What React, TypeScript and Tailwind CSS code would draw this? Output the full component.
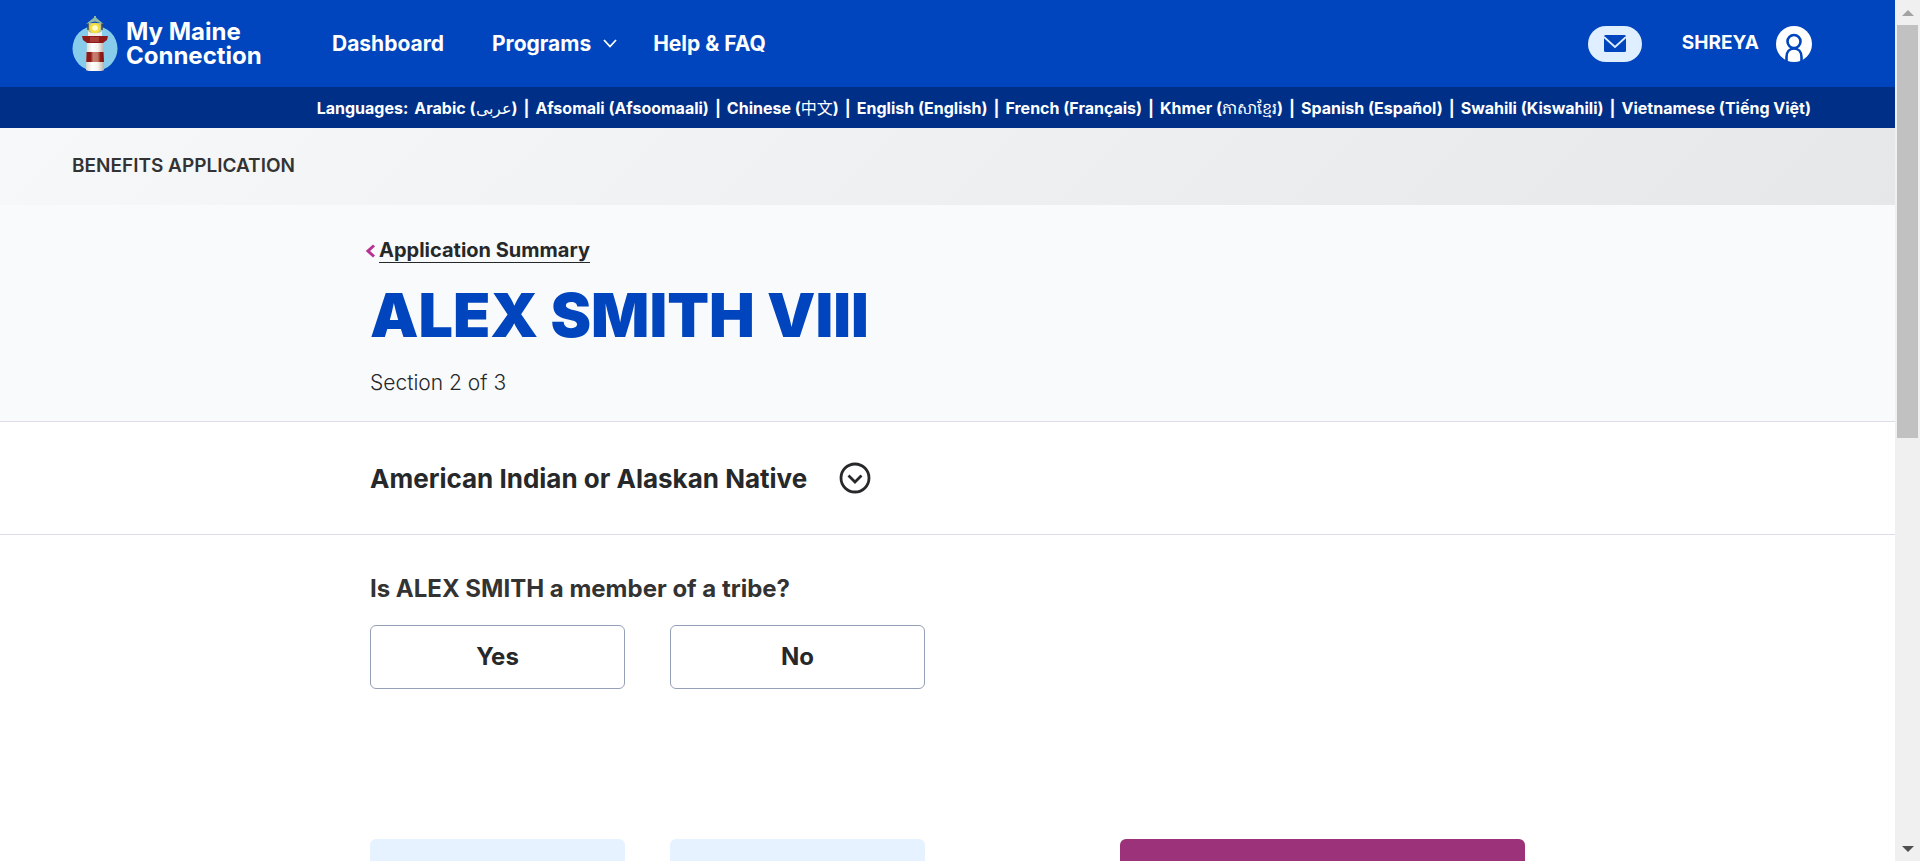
import { Fragment } from "react";

const languages = [
  { name: "Arabic", native: "عربى", light: true },
  { name: "Afsomali", native: "Afsoomaali" },
  { name: "Chinese", native: "中文", light: true },
  { name: "English", native: "English" },
  { name: "French", native: "Français" },
  { name: "Khmer", native: "ភាសាខ្មែរ", light: true },
  { name: "Spanish", native: "Español" },
  { name: "Swahili", native: "Kiswahili" },
  { name: "Vietnamese", native: "Tiếng Việt" },
];

function Lighthouse() {
  return (
    <svg width="46" height="56" viewBox="0 0 46 56" aria-hidden="true">
      <defs>
        <clipPath id="disc">
          <path d="M0 0H46V33A23 23 0 0 1 0 33Z" />
        </clipPath>
        <linearGradient id="tower" x1="0" x2="1" y1="0" y2="0">
          <stop offset="0" stopColor="#d9d5cf" />
          <stop offset="0.35" stopColor="#ffffff" />
          <stop offset="0.65" stopColor="#f7f4ef" />
          <stop offset="1" stopColor="#b9b2aa" />
        </linearGradient>
        <linearGradient id="band" x1="0" x2="1" y1="0" y2="0">
          <stop offset="0" stopColor="#8e1b17" />
          <stop offset="0.25" stopColor="#8e1b17" />
          <stop offset="0.4" stopColor="#c98070" />
          <stop offset="0.65" stopColor="#c07565" />
          <stop offset="0.8" stopColor="#941f1a" />
          <stop offset="1" stopColor="#7a1512" />
        </linearGradient>
      </defs>
      <circle cx="23" cy="32.500" r="22.500" fill="#87cdeb" />
      <g clipPath="url(#disc)">
        <path d="M15 22H31L32 55H14Z" fill="url(#tower)" />
        <path d="M14.500 36H31.500L32 46H14.200Z" fill="url(#band)" />
      </g>
      <rect x="16" y="7" width="14" height="12" fill="#b9c39a" />
      <path d="M16 7V14M30 7V14" stroke="#3f4a44" strokeWidth="1.500" />
      <circle cx="23" cy="12" r="5.300" fill="#f5df3a" />
      <circle cx="23" cy="12" r="2.800" fill="#fffbd0" />
      <path d="M14 8L22 1.500V0H24V1.500L31.500 8L23 5.500Z" fill="#8fb7a5" />
      <path d="M16 15C18 18 28 18 30 15V21H16Z" fill="#f3efe8" />
      <path d="M10 20H36L35 24L31 27H15L11 24Z" fill="#8f1a1a" />
      <path d="M18 21H27V26H18Z" fill="#a83b35" />
    </svg>
  );
}

function ScrollBar() {
  return (
    <div aria-hidden="true" className="flex w-[25px] shrink-0 flex-col items-center bg-[#f0f0f0]">
      <div className="flex h-[25px] shrink-0 items-center">
        <svg width="12" height="6" viewBox="0 0 12 6"><path d="M6 0L12 6H0Z" fill="#a3a3a3" /></svg>
      </div>
      <div className="h-[48%] w-[21px] bg-[#c1c1c1]" />
      <div className="mt-auto flex h-[25px] items-center">
        <svg width="12" height="6" viewBox="0 0 12 6"><path d="M0 0H12L6 6Z" fill="#505050" /></svg>
      </div>
    </div>
  );
}

export default function App() {
  return (
    <div className="flex h-screen overflow-hidden bg-white font-['Inter','Noto_Sans_CJK_SC',sans-serif] text-[#26282a]">
      <div className="min-w-0 flex-1 overflow-hidden">
        <header>
          <div className="flex h-[87px] items-center bg-[#0045bd] pr-[83px] pl-[72px] text-[21px] font-bold text-white">
            <a href="#home" className="flex items-center gap-2">
              <Lighthouse />
              <span className="flex w-[140px] flex-col text-2xl leading-6 whitespace-nowrap">
                <span>My Maine</span>
                <span>Connection</span>
              </span>
            </a>
            <nav className="ml-[66px] flex items-center gap-[48px]">
              <a href="#dashboard">Dashboard</a>
              <button type="button" className="-mr-3 flex items-center gap-3">
                Programs
                <svg width="14" height="9" viewBox="0 0 14 9" fill="none" stroke="currentColor" strokeWidth="1.800"><path d="M1 1L7 7.500L13 1" /></svg>
              </button>
              <a href="#help">Help &amp; FAQ</a>
            </nav>
            <div className="ml-auto flex items-center">
              <button type="button" aria-label="Messages" className="flex h-9 w-[54px] items-center justify-center rounded-full bg-[#e0efff]">
                <svg width="22" height="17" viewBox="0 0 22 17"><rect width="22" height="17" rx="1.500" fill="#0045bd" /><path d="M0 2L11 12L22 2" fill="none" stroke="#e0efff" strokeWidth="1.800" /></svg>
              </button>
              <button type="button" className="ml-10 flex items-center gap-[17px] text-[19px]">
                SHREYA
                <svg width="36" height="36" viewBox="0 0 36 36" aria-hidden="true">
                  <circle cx="18" cy="18" r="18" fill="#fff" />
                  <g fill="none" stroke="#0045bd" strokeWidth="2.600">
                    <circle cx="18" cy="15.500" r="6.500" />
                    <path d="M10.500 36V31C10.500 26 13.500 22.500 18 22.500S25.500 26 25.500 31V36" />
                  </g>
                </svg>
              </button>
            </div>
          </div>
          <div className="flex h-[41px] items-center justify-end gap-[6px] bg-[#002f87] pr-[84px] text-base font-bold whitespace-nowrap text-white">
            <span>Languages:</span>
            {languages.map(({ name, native, light }, i) => (
              <Fragment key={name}>
                {i > 0 && <span>|</span>}
                <a href="#language">
                  {name} (<span className={light ? "font-normal" : ""}>{native}</span>)
                </a>
              </Fragment>
            ))}
          </div>
        </header>

        <div className="flex h-[77px] items-center bg-linear-[135deg] from-[#f6f8fa] to-[#e6e7e9] pl-[72px]">
          <p className="text-[19px] font-semibold text-[#333]">BENEFITS APPLICATION</p>
        </div>

        <main>
          <section className="border-b border-[#dcdde8] bg-[#f8fafc]">
            <div className="mx-auto h-[216px] max-w-[1155px] pt-[33px]">
              <a href="#summary" className="flex items-center text-xl leading-7 font-bold">
                <svg width="9" height="14" viewBox="0 0 9 14" fill="none" stroke="#b83292" strokeWidth="3" className="-ml-1 shrink-0"><path d="M8 1.500L2 7L8 12.500" /></svg>
                <span className="ml-1 border-b border-[#26282a] leading-6">Application Summary</span>
              </a>
              <h1 className="mt-4 text-[61px] leading-[72px] font-black text-[#0045bd]">ALEX SMITH VIII</h1>
              <p className="mt-4 text-[21px] leading-8 font-light">Section 2 of 3</p>
            </div>
          </section>

          <section className="border-b border-[#dcdde8]">
            <div className="mx-auto flex h-[112px] max-w-[1155px] items-center gap-8">
              <h2 className="text-[26px] font-bold">American Indian or Alaskan Native</h2>
              <button type="button" aria-label="Expand section">
                <svg width="32" height="32" viewBox="0 0 32 32" fill="none" stroke="#26282a" strokeWidth="2.800"><circle cx="16" cy="16" r="14" /><path d="M9.500 13.500L16 20L22.500 13.500" /></svg>
              </button>
            </div>
          </section>

          <section className="mx-auto max-w-[1155px] pt-[38px]">
            <fieldset>
              <legend className="text-2xl leading-8 font-bold text-[#333]">Is ALEX SMITH a member of a tribe?</legend>
              <div className="mt-5 flex gap-[45px] text-2xl font-bold">
                <button type="button" className="h-16 w-[255px] rounded-md border border-[#94a0b8]">Yes</button>
                <button type="button" className="h-16 w-[255px] rounded-md border border-[#94a0b8]">No</button>
              </div>
            </fieldset>
            <div className="mt-[150px] flex gap-[45px]">
              <button type="button" aria-label="Back" className="h-16 w-[255px] rounded-md bg-[#e6f2ff]" />
              <button type="button" aria-label="Save and exit" className="h-16 w-[255px] rounded-md bg-[#e6f2ff]" />
              <button type="button" aria-label="Continue" className="ml-auto h-16 w-[405px] rounded-md bg-[#9c3279]" />
            </div>
          </section>
        </main>
      </div>
      <ScrollBar />
    </div>
  );
}
